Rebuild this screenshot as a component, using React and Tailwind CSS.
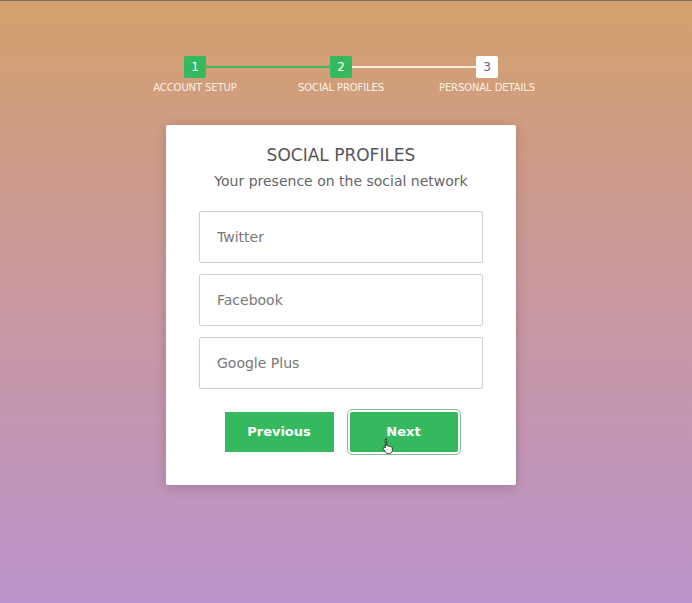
import React from "react";

const steps = [
  { n: 1, label: "Account Setup", done: true },
  { n: 2, label: "Social Profiles", done: true },
  { n: 3, label: "Personal Details", done: false },
];

function Stepper() {
  return (
    <div className="flex justify-center pt-[55px]">
      {steps.map((s, i) => (
        <div key={s.n} className="flex w-[146px] flex-col items-center">
          <div className="flex w-full items-center">
            <div
              className={
                "h-[2px] flex-1 " +
                (i === 0 ? "bg-transparent" : i <= 1 ? "bg-[#3cb85e]" : "bg-[#fbeedd]")
              }
            />
            <div
              className={
                "flex h-[22px] w-[22px] items-center justify-center rounded-[2px] text-[12px] " +
                (s.done ? "bg-[#35b95f] text-white" : "bg-white text-[#666]")
              }
            >
              {s.n}
            </div>
            <div
              className={
                "h-[2px] flex-1 " +
                (i === 2 ? "bg-transparent" : i === 0 ? "bg-[#3cb85e]" : "bg-[#fbeedd]")
              }
            />
          </div>
          <div className="mt-[2px] text-[10px] uppercase tracking-[-0.1px] text-[#fcf0e4]">
            {s.label}
          </div>
        </div>
      ))}
    </div>
  );
}

function HandCursor() {
  return (
    <svg
      className="pointer-events-none absolute left-[32px] top-[26px]"
      width="12"
      height="16"
      viewBox="0 0 12 16"
    >
      <path
        d="M3.5 1.2c.7 0 1.2.5 1.2 1.2v5.2l.4-.1c.6-.1 1.1.2 1.3.6.4-.2 1-.1 1.3.3.4-.2 1-.1 1.3.4.6-.1 1.3.3 1.3 1v2.6c0 1.6-1.1 3-2.6 3H5.4c-.8 0-1.5-.4-1.9-1L1.2 10.6c-.4-.5-.3-1.200.2-1.5.4-.3 1-.2 1.3.2l.6.7V2.4c0-.7.5-1.2 1.2-1.2z"
        fill="#fff"
        stroke="#222"
        strokeWidth="0.9"
      />
    </svg>
  );
}

export default function App() {
  return (
    <div
      className="min-h-[603px] border-t border-[#7a6d60] bg-gradient-to-b from-[#d4a06b] via-[#c998a0] to-[#bc93cc] pr-[10px]"
      style={{ fontFamily: '"DejaVu Sans", sans-serif' }}
    >
      <Stepper />

      {/* card */}
      <div className="mx-auto mt-[30px] w-[350px] rounded-[2px] bg-white px-[33px] pb-[33px] pt-[20px] shadow-[0_2px_12px_rgba(80,40,40,0.25)]">
        <h3 className="text-center text-[17px] font-normal leading-[20px] text-[#555]">
          SOCIAL PROFILES
        </h3>
        <p className="mt-[6px] text-center text-[14px] leading-[20px] text-[#666]">
          Your presence on the social network
        </p>

        <div className="mt-[20px] flex flex-col gap-[11px]">
          {["Twitter", "Facebook", "Google Plus"].map((p) => (
            <input
              key={p}
              placeholder={p}
              className="h-[52px] w-full rounded-[2px] border border-[#cfcfcf] bg-white px-[17px] text-[14px] text-[#555] outline-none placeholder:text-[#777]"
            />
          ))}
        </div>

        <div className="mt-[23px] flex items-center justify-center gap-[16px]">
          <button className="h-[40px] w-[109px] bg-[#35b95f] text-[13px] font-bold text-white">
            Previous
          </button>
          <button className="relative h-[40px] w-[108px] rounded-[2px] bg-[#35b95f] text-[13px] font-bold text-white outline outline-1 outline-offset-2 outline-[#7fbf8f]">
            Next
            <HandCursor />
          </button>
        </div>
      </div>
    </div>
  );
}
